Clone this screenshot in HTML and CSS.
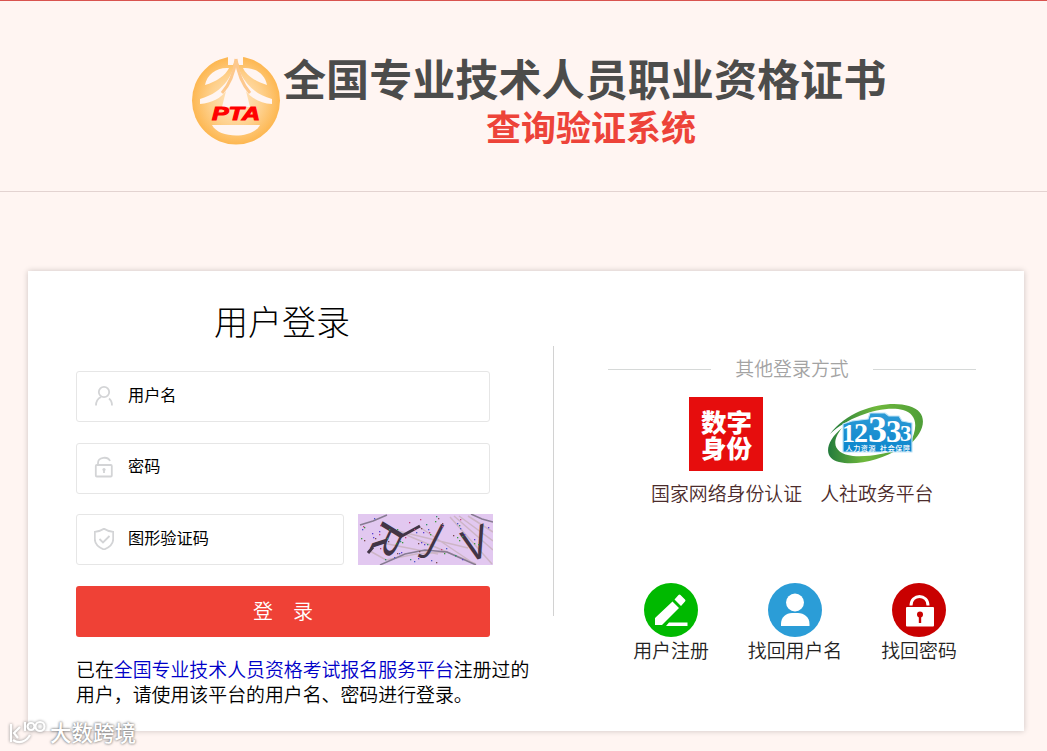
FILE: index.html
```html
<!DOCTYPE html>
<html lang="zh-CN">

<head>
    <meta charset="UTF-8">
    <meta name="viewport" content="width=device-width, initial-scale=1.0">
    <title>用户登录</title>
    <link rel="stylesheet" href="styles.css">
</head>

<body>

    <header class="header">
        <svg class="logo" viewBox="0 0 90 90">
            <defs>
                <radialGradient id="gold" cx="50%" cy="50%" r="50%">
                    <stop offset="0" stop-color="#ffe9cb" />
                    <stop offset="0.6" stop-color="#fed08c" />
                    <stop offset="1" stop-color="#fdb751" />
                </radialGradient>
            </defs>
            <circle cx="45" cy="44.500" r="44" fill="url(#gold)" />
            <path d="M37 -1h15v10h-4l-3-6-3 6h-5z" fill="#fff5f2" />
            <path d="M14 29C16 18 26 11 38 12 35 19 25 26 14 29zM76 29C74 18 64 11 52 12 55 19 65 26 76 29z" fill="#fff5f2" />
            <path d="M45 1C43 17 34 36 9 43v5C21 47 30 42 35 35L31 51h28L55 35C60 42 69 47 81 48v-5C56 36 47 17 45 1z" fill="#fff5f2" />
            <path d="M45 3C43 19 38 29 31 37M45 3C47 19 52 29 59 37" fill="none" stroke="#fdc88d" stroke-width="3" />
            <path d="M21 69h48C62 83 28 83 21 69z" fill="#fff5f2" />
            <text class="pta" x="45" y="64" text-anchor="middle" textLength="48" lengthAdjust="spacingAndGlyphs">PTA</text>
        </svg>
        <div class="names">
            <h1>全国专业技术人员职业资格证书</h1>
            <h2>查询验证系统</h2>
        </div>
    </header>

    <main class="card">
        <section class="login">
            <h3>用户登录</h3>
            <form>
                <div class="field">
                    <svg viewBox="0 0 20 22">
                        <circle cx="10" cy="7" r="5.200" />
                        <path d="M2 20.500c0-4 2-7 5-8.500M18 20.500c0-3-1-5.500-3-7" />
                    </svg>
                    <input type="text" placeholder="用户名">
                </div>
                <div class="field">
                    <svg viewBox="0 0 20 22">
                        <rect x="1.800" y="9" width="16" height="11.500" rx="1" />
                        <path d="M4 9V7c0-6 10-7 12-2M10 13.500v3.500" />
                        <circle class="dot" cx="10" cy="13.500" r="1.600" />
                    </svg>
                    <input type="password" placeholder="密码">
                </div>
                <div class="code-row">
                    <div class="field">
                        <svg viewBox="0 0 20 22">
                            <path d="M10 .8C7 3 4 3.500.8 3.800V11c0 5 4 8.500 9.200 10.500 5.200-2 9.200-5.500 9.200-10.500V3.800C16 3.500 13 3 10 .8z" />
                            <path d="M5.500 11l3.500 3.500L15.500 8" />
                        </svg>
                        <input type="text" placeholder="图形验证码">
                    </div>
                    <svg class="captcha" id="captcha" viewBox="0 0 135 51">
                        <rect width="135" height="51" fill="#e2c8f0" />
                        <g fill="none" stroke="#cdb5c6" stroke-width="1.500">
                            <path d="M34 15L118 50M40 17L110 34M60 12L112 47M92 3L134 50M96 2L135 36M101 2L135 27M110 2L135 18M12 37l16 9 30-6 30-2M20 28l60 12" />
                        </g>
                        <g fill="none" stroke="#877b92" stroke-width="1.500">
                            <path d="M2 11l13-4 14-6M22 51l25-11 20-4 22 2 29 13M113 0l11 5 11 3" />
                        </g>
                        <g class="glyphs">
                            <text transform="matrix(-.7 1.500 -.81 -.5 27 2)">R</text>
                            <path d="M42 23L62 12M15 33L10 39" />
                            <text transform="matrix(.98 .3 -.54 1.070 66 36.500)">J</text>
                            <text transform="matrix(1.140 -.476 .308 1.190 109 50)">V</text>
                        </g>
                    </svg>
                </div>
                <button type="button">登　录</button>
            </form>
            <p class="tip">已在<a href="#">全国专业技术人员资格考试报名服务平台</a>注册过的用户，请使用该平台的用户名、密码进行登录。</p>
        </section>

        <div class="divider"></div>

        <section class="other">
            <div class="other-title"><span>其他登录方式</span></div>
            <div class="platforms">
                <a href="#">
                    <span class="pic"><span class="szsf">数字<br>身份</span></span>
                    国家网络身份认证
                </a>
                <a href="#">
                    <span class="pic">
                        <svg width="100" height="66" viewBox="0 0 100 66">
                            <defs>
                                <linearGradient id="green" x1="0" y1="0" x2="1" y2="0">
                                    <stop offset="0" stop-color="#237b3c" />
                                    <stop offset="0.5" stop-color="#6fb83c" />
                                    <stop offset="1" stop-color="#4f9e38" />
                                </linearGradient>
                                <linearGradient id="blue" x1="0" y1="0" x2="0" y2="1">
                                    <stop offset="0" stop-color="#2d9ad6" />
                                    <stop offset="1" stop-color="#0b86cc" />
                                </linearGradient>
                            </defs>
                            <path d="M3 33C23 6 63-1 82 5 103 11 98 31 82 44 92 26 90 13 76 9 57 4 22 15 3 33z" fill="url(#green)" />
                            <path d="M15 27C2 43 9 53 26 55 42 56 60 53 73 47 55 59 29 65 12 61-4 57-2 41 15 27z" fill="url(#green)" />
                            <path d="M16 23l9-3 16-2 2-6h15l4 3h10l3 5 10 2v29H16z" fill="url(#blue)" stroke="#bfe4f7" stroke-width="1.200" stroke-linejoin="round" />
                            <g class="hotline">
                                <text x="15" y="41" font-size="26">1</text>
                                <text x="27" y="41" font-size="28">2</text>
                                <text x="41" y="41" font-size="38">3</text>
                                <text x="59" y="41" font-size="31">3</text>
                                <text x="73" y="40" font-size="23">3</text>
                            </g>
                            <text class="hotline-sub" x="18.500" y="50" textLength="30">人力资源</text>
                            <text class="hotline-sub" x="53" y="50" textLength="30">社会保障</text>
                        </svg>
                    </span>
                    人社政务平台
                </a>
            </div>
            <div class="actions">
                <a href="#">
                    <svg viewBox="0 0 54 54">
                        <circle cx="27" cy="27" r="27" fill="#00b900" />
                        <path d="M28.500 18.500l6.500 6.500L18 42h-7v-7zM30.500 16.500l4-4.500q1-1 2 0l4.500 4.500q1 1 0 2L37 23zM25 39.500h18.500V43H22z" fill="#fff" />
                    </svg>
                    用户注册
                </a>
                <a href="#">
                    <svg viewBox="0 0 54 54">
                        <circle cx="27" cy="27" r="27" fill="#2b9dd7" />
                        <circle cx="27" cy="19.500" r="9" fill="#fff" />
                        <path d="M13 43v-2c0-7 5-11 11-11h6c6 0 11.500 4 11.500 11v2z" fill="#fff" />
                    </svg>
                    找回用户名
                </a>
                <a href="#">
                    <svg viewBox="0 0 54 54">
                        <circle cx="27" cy="27" r="27" fill="#c90000" />
                        <path d="M19 22.500c0-12 17-12 17 0" fill="none" stroke="#fff" stroke-width="3" />
                        <rect x="14" y="24" width="28" height="19.500" rx="1" fill="#fff" />
                        <circle cx="28" cy="31.500" r="3" fill="#c90000" />
                        <path d="M26.800 32h2.400v8h-2.400z" fill="#c90000" />
                    </svg>
                    找回密码
                </a>
            </div>
        </section>
    </main>

    <div class="watermark">
        <svg width="40" height="28" viewBox="0 0 40 28">
            <path d="M4 6v18M13 9L7 15l4 5M6 22c6 4 13 2 17-5M18 4v9" />
            <circle cx="24" cy="8.500" r="3.500" />
            <circle cx="33" cy="8.500" r="4.500" />
        </svg>
        <span>大数跨境</span>
    </div>

    <script>
        // speckles over the captcha picture
        const captcha = document.getElementById('captcha');
        const colors = ['#5b3fd0', '#2f8f6b', '#c0407a', '#3c9a3c', '#4a58c8', '#7a4a50'];
        let seed = 7;

        function next(max) {
            seed = (seed * 1103 + 12345) % 65536;
            return seed % max;
        }

        for (let i = 0; i < 70; i++) {
            const dot = document.createElementNS('http://www.w3.org/2000/svg', 'rect');
            dot.setAttribute('x', next(i % 3 ? 105 : 133));
            dot.setAttribute('y', next(49));
            dot.setAttribute('width', 1.3);
            dot.setAttribute('height', 1.3);
            dot.setAttribute('fill', colors[i % colors.length]);
            captcha.appendChild(dot);
        }
    </script>

</body>

</html>
```
FILE: styles.css
```css
* {
    box-sizing: border-box;
}

body {
    margin: 0;
    height: 751px;
    overflow: hidden;
    background: #fff5f2;
    font-family: "Noto Sans CJK SC", sans-serif;
    font-weight: 350;
    font-size: 18.9px;
    color: #000;
}

h1, h2, h3, p {
    margin: 0;
}

a {
    text-decoration: none;
}

.header {
    height: 192px;
    padding: 55px 0 0 191px;
    border-top: 1px solid #d9534f;
    border-bottom: 1px solid #e3d3d1;
    display: flex;
}

.logo {
    width: 90px;
    height: 90px;
}

.pta {
    font: italic 900 18px "Liberation Sans", sans-serif;
    fill: #f00;
    stroke: #f00;
}

.names {
    margin-top: -3px;
    padding-left: 2px;
}

.names h1 {
    font-size: 43.1px;
    line-height: 48px;
    font-weight: 700;
    color: #4c4c4b;
    white-space: nowrap;
}

.names h2 {
    margin-left: 203px;
    font-size: 35px;
    line-height: 49px;
    font-weight: 700;
    color: #ed4339;
}

.card {
    width: 996px;
    height: 460px;
    margin: 79px 0 0 28px;
    background: #fff;
    box-shadow: 0 0 6px rgba(0, 0, 0, .2);
    display: flex;
}

.login {
    width: 525px;
    padding: 25px 0 0 48px;
}

.login h3 {
    width: 412px;
    font-size: 34px;
    line-height: 50px;
    font-weight: 300;
    text-align: center;
}

form {
    width: 417px;
    margin-top: 25px;
    display: flex;
    flex-direction: column;
    gap: 20.6px;
}

.field {
    width: 414px;
    height: 51px;
    padding-left: 17px;
    border: 1px solid #e6e6e6;
    border-radius: 3px;
    display: flex;
    align-items: center;
}

.field svg {
    width: 20px;
    height: 22px;
    margin-bottom: 2px;
    fill: none;
    stroke: #d3d4d6;
    stroke-width: 1.8;
}

.field svg .dot {
    fill: #d3d4d6;
    stroke: none;
}

.field input {
    width: 200px;
    margin: 0 0 6px 14px;
    padding: 0;
    border: 0;
    outline: 0;
    background: none;
    font: 400 16.2px "Noto Sans CJK SC", sans-serif;
}

.field input::placeholder {
    color: #000;
}

.code-row {
    display: flex;
    justify-content: space-between;
}

.code-row .field {
    width: 268px;
}

.captcha {
    width: 135px;
    height: 51px;
}

.glyphs {
    font: 400 36px "Open Sans", sans-serif;
    fill: #423546;
}

.glyphs path {
    fill: none;
    stroke: #423546;
    stroke-width: 3;
}

button {
    width: 414px;
    height: 51px;
    padding: 0 0 2px;
    border: 0;
    border-radius: 3px;
    background: #ef4136;
    color: #fff;
    font: 350 20px "Noto Sans CJK SC", sans-serif;
}

.tip {
    width: 456px;
    margin: 19px 0 0;
    line-height: 25.5px;
}

.tip a {
    color: #0000c8;
}

.divider {
    width: 1px;
    height: 270px;
    margin-top: 75px;
    background: #d2d2d2;
}

.other {
    width: 470px;
    padding-top: 84px;
}

.other-title {
    width: 368px;
    height: 28px;
    margin-left: 54px;
    display: flex;
    align-items: center;
    gap: 24px;
    color: #a3a3a3;
}

.other-title span {
    margin-top: -3px;
}

.other-title::before,
.other-title::after {
    content: "";
    flex: 1;
    height: 1px;
    background: #d6d9d8;
}

.platforms {
    margin: 14px 0 0 97px;
    display: flex;
    gap: 18px;
}

.platforms a {
    line-height: 28px;
    color: #4c2c2c;
    text-align: center;
}

.pic {
    height: 74px;
    margin-bottom: 8px;
    display: flex;
    align-items: center;
    justify-content: center;
}

.szsf {
    width: 74px;
    height: 74px;
    margin-right: 1px;
    padding: 11px 0 0 1px;
    background: #e60d0d;
    color: #fff;
    font-size: 25.5px;
    line-height: 26px;
    font-weight: 900;
}

.hotline {
    font-family: "Liberation Serif", serif;
    font-weight: 700;
    fill: #fff;
}

.hotline-sub {
    font-size: 7px;
    font-weight: 500;
    fill: #fff;
}

.actions {
    margin: 76px 0 0 55px;
    display: flex;
}

.actions a {
    width: 124px;
    line-height: 25px;
    color: #222;
    text-align: center;
}

.actions svg {
    width: 54px;
    height: 54px;
    margin: 0 auto;
    display: block;
}

.watermark {
    position: absolute;
    left: 7px;
    bottom: 4px;
    display: flex;
    align-items: center;
    gap: 3px;
    font-size: 21.5px;
    line-height: 30px;
    font-weight: 500;
    color: #fff;
    text-shadow: 0 0 3px #777, 0 0 2px #999;
}

.watermark svg {
    fill: none;
    stroke: #fff;
    stroke-width: 2.2;
    filter: drop-shadow(0 0 1.5px #888);
}
```
